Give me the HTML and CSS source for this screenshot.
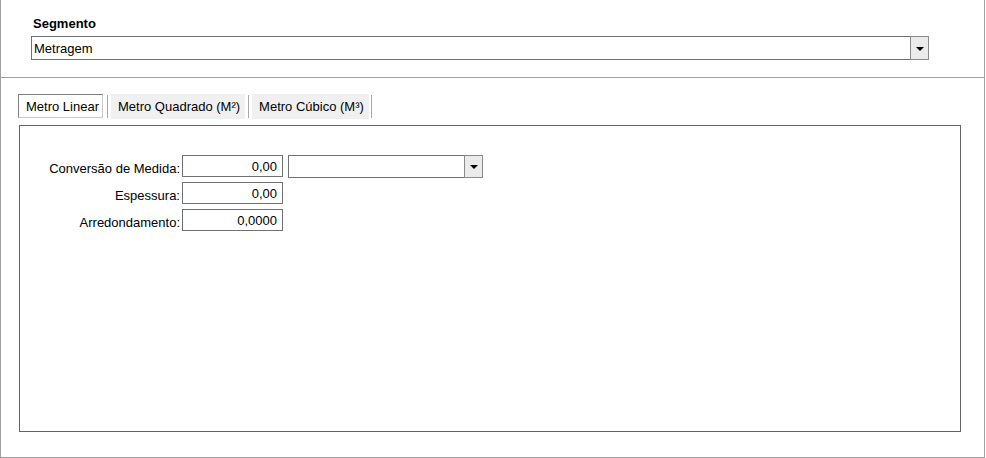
FILE: index.html
```html
<!DOCTYPE html>
<html lang="pt">
<head>
<meta charset="utf-8">
<title>Segmento</title>
<link rel="stylesheet" href="styles.css">
</head>
<body>
<div class="frame">
  <div class="header">
    <div class="field-label">Segmento</div>
    <div class="select select-main">
      <span class="select-text">Metragem</span>
      <span class="select-btn"><span class="arrow"></span></span>
    </div>
  </div>
  <div class="body">
    <div class="tabs">
      <div class="tab active">Metro Linear</div>
      <span class="sep sep-first"></span>
      <div class="tab">Metro Quadrado (M²)</div>
      <span class="sep"></span>
      <div class="tab">Metro Cúbico (M³)</div>
      <span class="sep sep-last"></span>
    </div>
    <div class="panel">
      <div class="form">
        <label class="lbl">Conversão de Medida:</label>
        <div class="input">0,00</div>
        <div class="select select-small">
          <span class="select-text"></span>
          <span class="select-btn"><span class="arrow"></span></span>
        </div>
        <label class="lbl">Espessura:</label>
        <div class="input">0,00</div>
        <span></span>
        <label class="lbl">Arredondamento:</label>
        <div class="input">0,0000</div>
        <span></span>
      </div>
    </div>
  </div>
</div>
</body>
</html>
```
FILE: styles.css
```css
* { box-sizing: border-box; }
html, body { margin: 0; padding: 0; background: #fff; }
body {
  font-family: "Liberation Sans", Arial, sans-serif;
  font-size: 13px;
  line-height: 15px;
  color: #000;
}
.frame {
  width: 985px;
  height: 458px;
  border-left: 1px solid #a0a0a0;
  border-right: 1px solid #a0a0a0;
  border-bottom: 1px solid #a0a0a0;
}
.header {
  height: 78px;
  padding: 16px 0 0 30px;
  border-bottom: 1px solid #a0a0a0;
}
.field-label {
  font-weight: bold;
  margin-left: 2px;
  height: 15px;
}
.select {
  display: flex;
  border: 1px solid #707070;
  background: #fff;
}
.select-main {
  margin-top: 5px;
  width: 898px;
  height: 24px;
}
.select-text {
  flex: 1;
  padding: 4px 0 0 2px;
}
.select-btn {
  width: 19px;
  margin: -1px -1px -1px 0;
  border: 1px solid #8a8a8a;
  background: #ebebeb;
  display: flex;
  align-items: center;
  justify-content: center;
}
.arrow {
  width: 0;
  height: 0;
  border-left: 4px solid transparent;
  border-right: 4px solid transparent;
  border-top: 4px solid #000;
  margin-top: 1px;
}
.body {
  padding: 16px 0 0 17px;
}
.tabs {
  display: flex;
  align-items: flex-start;
  height: 31px;
}
.tab {
  height: 25px;
  padding: 5px 5px 0 7px;
  background: #f0f0f0;
  white-space: nowrap;
}
.tab.active {
  height: 24px;
  padding: 4px 3px 0 7px;
  background: #fff;
  border: 1px solid;
  border-color: #808080 #c8c8c8 #c8c8c8 #808080;
}
.sep {
  width: 1px;
  height: 23px;
  margin: 1px 3px 0 3px;
  background: #a8a8a8;
}
.sep-first { margin-left: 4px; }
.sep-last { margin-left: 2px; }
.panel {
  margin-left: 1px;
  width: 942px;
  height: 307px;
  border: 1px solid #646464;
  padding-top: 29px;
}
.form {
  display: grid;
  grid-template-columns: 160px 101px 198px;
  grid-auto-rows: 22px;
  column-gap: 2px;
  row-gap: 5px;
}
.lbl {
  text-align: right;
  padding-top: 6px;
  white-space: nowrap;
}
.input {
  border: 1px solid #707070;
  text-align: right;
  padding: 3px 5px 0 0;
  background: #fff;
}
.select-small {
  margin-left: 3px;
  height: 23px;
}
.select-small .select-btn { width: 19px; }
```
